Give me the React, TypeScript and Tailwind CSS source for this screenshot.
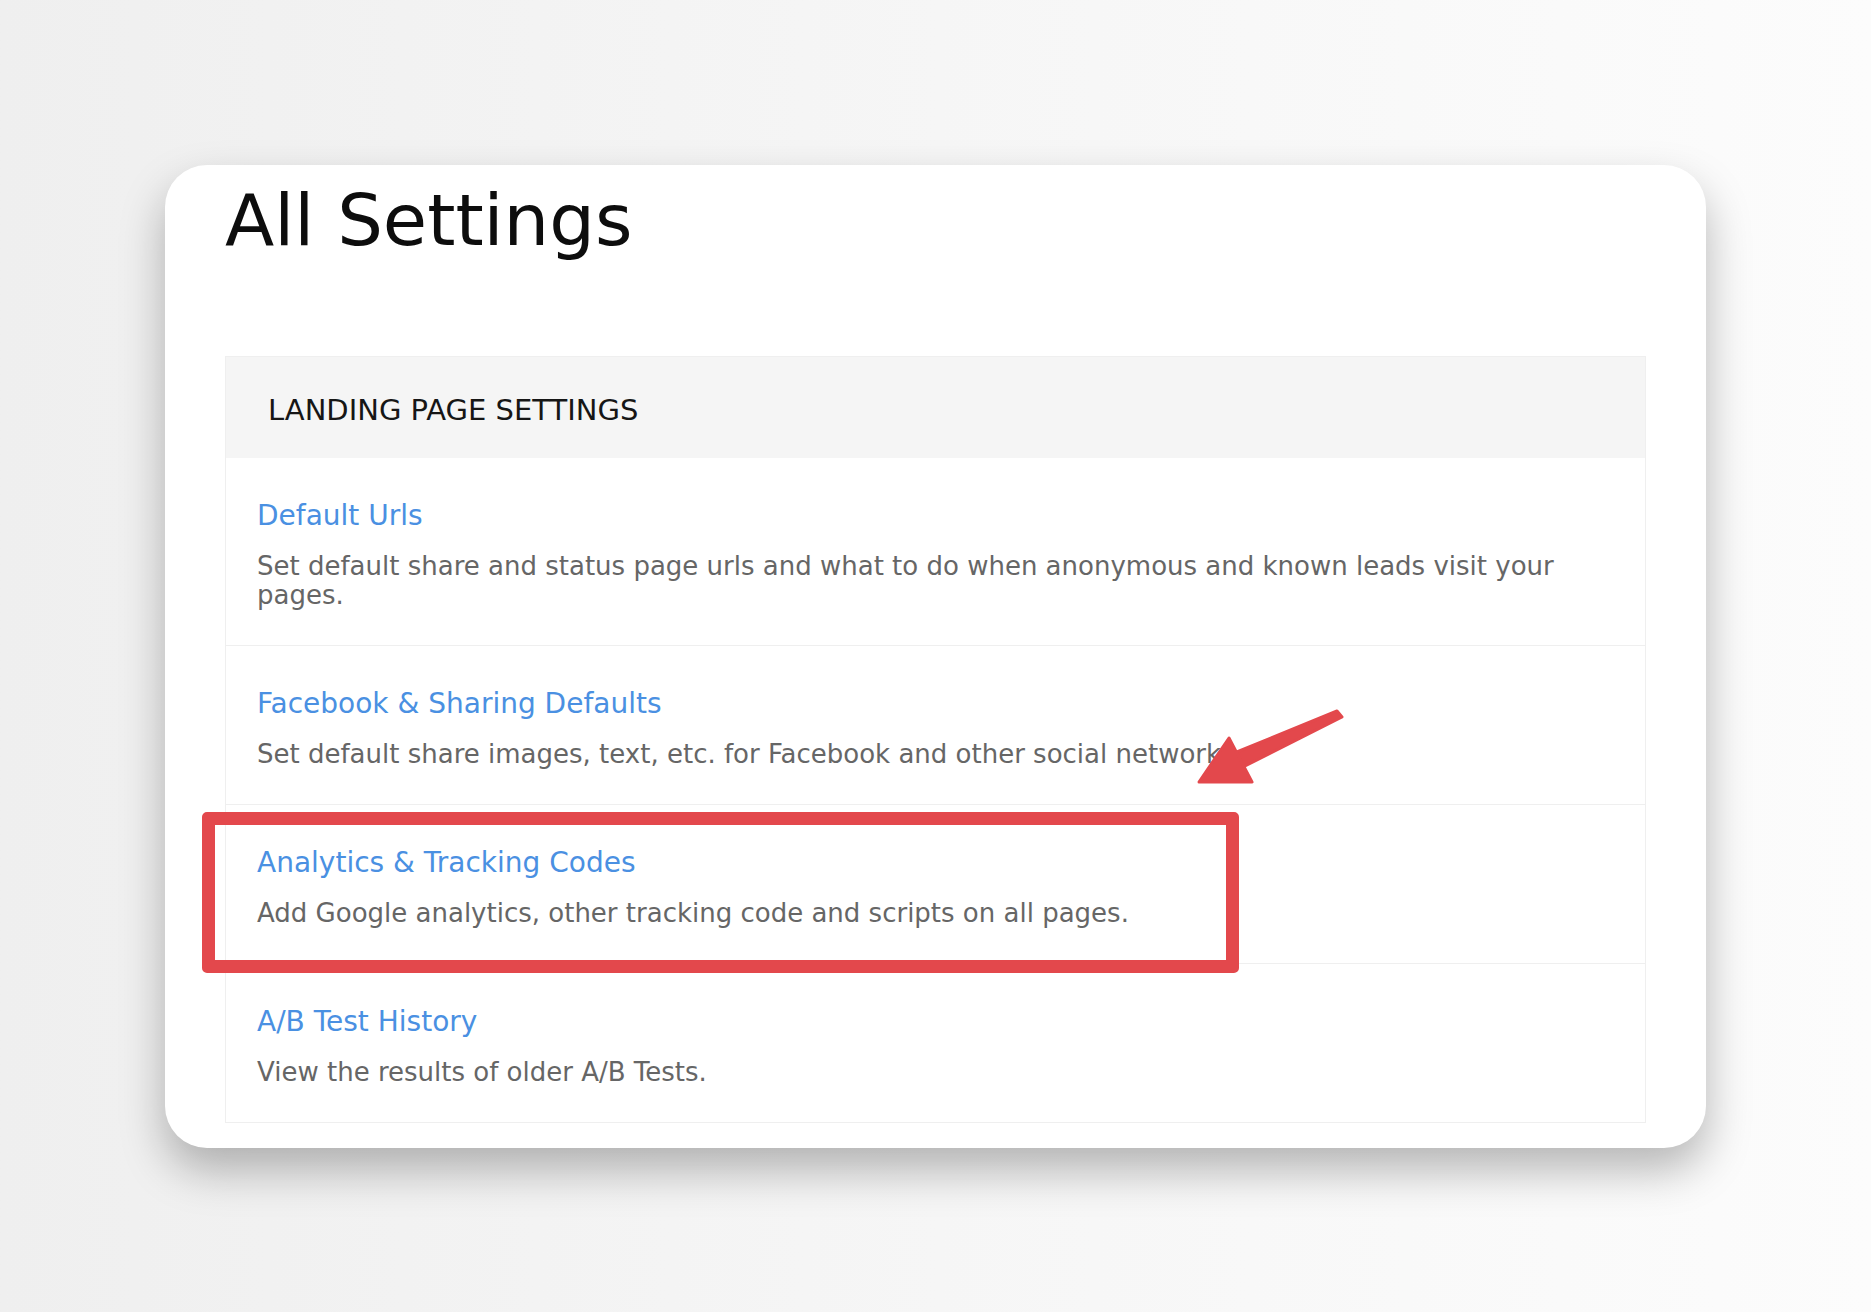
import React from "react";

const rows = [
  {
    title: "Default Urls",
    desc: "Set default share and status page urls and what to do when anonymous and known leads visit your pages.",
  },
  {
    title: "Facebook & Sharing Defaults",
    desc: "Set default share images, text, etc. for Facebook and other social networks.",
  },
  {
    title: "Analytics & Tracking Codes",
    desc: "Add Google analytics, other tracking code and scripts on all pages.",
  },
  {
    title: "A/B Test History",
    desc: "View the results of older A/B Tests.",
  },
];

export default function App() {
  return (
    <div
      className="relative min-h-[1312px] w-full bg-linear-to-r from-[#efefef] via-[#f6f6f6] to-[#fcfcfc] pl-[165px] pt-[165px]"
      style={{ fontFamily: '"DejaVu Sans", Verdana, sans-serif' }}
    >
      <div className="relative w-[1541px] rounded-[42px] bg-white px-[60px] pb-[25px] pt-[19px] shadow-[0_22px_45px_rgba(0,0,0,0.28)]">
        <h1 className="mb-[100px] text-[72px] leading-[72px] text-[#0d0d0d]">All Settings</h1>
        <div className="border border-[#efefef]">
          <div className="h-[101px] bg-[#f5f5f5] pl-[42px] pt-[36px] text-[29px] leading-[34px] text-[#161616]">
            LANDING PAGE SETTINGS
          </div>
          {rows.map((r, i) => (
            <div
              key={r.title}
              className={
                i === 0
                  ? "px-[31px] pb-[35px] pt-[41px]"
                  : "border-t border-[#efefef] px-[31px] pb-[35px] pt-[41px]"
              }
            >
              <div className="text-[28px] leading-[34px] text-[#4a90e2]">{r.title}</div>
              <div className="mt-[19px] text-[26px] leading-[29px] text-[#666666]">{r.desc}</div>
            </div>
          ))}
        </div>
      </div>

      {/* red highlight box */}
      <div className="absolute left-[202px] top-[812px] h-[161px] w-[1037px] rounded-[5px] border-[13px] border-[#e3484c]" />

      {/* red arrow */}
      <svg className="absolute left-0 top-0" width="1871" height="1312" viewBox="0 0 1871 1312">
        <g fill="#e3484c" stroke="#e3484c" strokeWidth="3" strokeLinejoin="round">
          <polygon points="1337,711 1342,717 1237,770 1227,756" />
          <polygon points="1199,782 1229,738 1252,782" />
        </g>
      </svg>
    </div>
  );
}
